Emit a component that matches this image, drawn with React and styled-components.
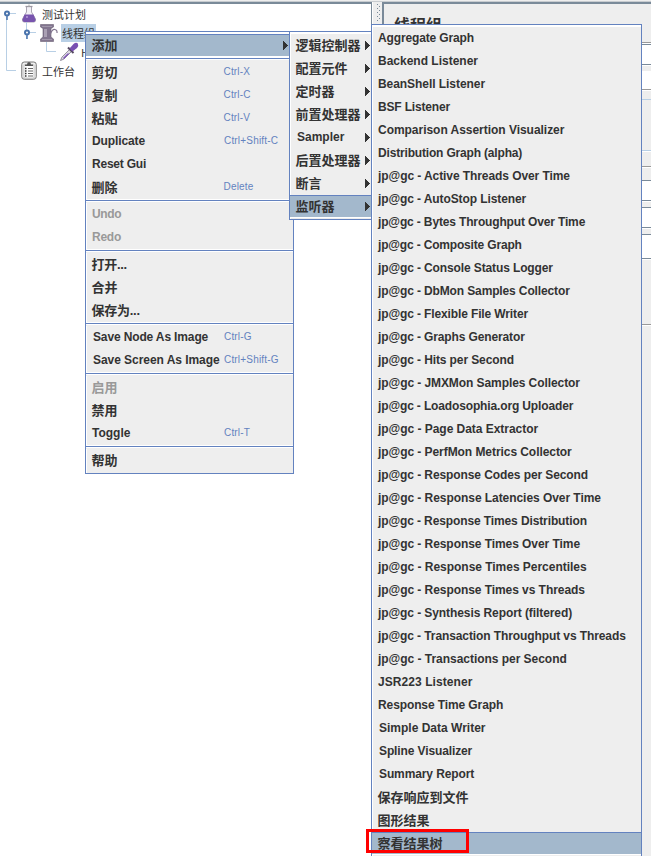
import React from "react";
import styled, { createGlobalStyle } from "styled-components";

const GlobalStyle = createGlobalStyle`
  * { box-sizing: border-box; }
  body { margin: 0; background: #fff; overflow: hidden; }
`;

const line = "#6382bf";
const edge = "#7a8a99";

const Window = styled.main`
  position: relative;
  width: 651px;
  height: 856px;
  display: flex;
  flex-direction: column;
  overflow: hidden;
  background: #eee;
  color: #333;
  font-family: "Liberation Sans", "Noto Sans CJK SC", sans-serif;
  font-size: 12px;
`;
const TopStrip = styled.div`
  height: 2px;
  flex: none;
  background: #eee;
  border-bottom: 1px solid #c8ccd0;
`;
const Split = styled.div`
  flex: 1;
  display: flex;
  min-height: 0;
`;
const TreePane = styled.section`
  width: 372px;
  background: #fff;
  border-top: 2px solid ${edge};
  border-right: 1px solid ${edge};
  padding-left: 2px;
`;
const Divider = styled.div`
  width: 10px;
  border-left: 1px solid #fff;
  background: #eee;
`;
const Grip = styled.svg`
  display: block;
  margin: 2px 0 0 4px;
`;
const DetailPane = styled.section`
  flex: 1;
  border-top: 2px solid ${edge};
  border-left: 2px solid ${edge};
`;
const PaneTitle = styled.h1`
  margin: 0;
  padding: 10px 0 0 10px;
  height: 38px;
  font: bold 16px/20px "Noto Sans CJK SC", sans-serif;
`;
const Band = styled.div`
  height: ${(p) => p.$h}px;
  margin-top: ${(p) => p.$gap || 0}px;
  background: ${(p) => (p.$white ? "#fff" : "#eee")};
  border-top: ${(p) => (p.$top ? `1px solid ${p.$top}` : "0")};
  border-bottom: ${(p) => (p.$bottom ? `1px solid ${p.$bottom}` : "0")};
  box-shadow: 0 1px 0 #fff;
`;

const TreeBody = styled.div`
  display: grid;
  grid-template-rows: 19px 19px 19px 19px;
`;
const TreeRow = styled.div`
  display: flex;
  align-items: center;
  padding-left: ${(p) => p.$indent}px;
  height: 19px;
  gap: ${(p) => p.$gap ?? 4}px;
`;
const TreeLabel = styled.span`
  font: 11px/18px "Noto Sans CJK SC", sans-serif;
  padding: 0 1px;
  white-space: nowrap;
  background: ${(p) => (p.$selected ? "#b8cfe5" : "transparent")};
`;
const TreeLines = styled.svg`
  position: absolute;
  left: 0;
  top: 4px;
`;
const Icon = styled.svg`
  flex: none;
  display: block;
`;

const Popup = styled.div`
  position: absolute;
  left: ${(p) => p.$x}px;
  top: ${(p) => p.$y}px;
  width: ${(p) => p.$w}px;
  background: #eee;
  border: 1px solid ${line};
  box-shadow: inset 1px 1px 0 #fff, inset 0 2px 0 #fff;
  padding: 2px 0 1px;
`;
const Item = styled.div`
  height: 23px;
  display: flex;
  align-items: center;
  padding: 0 5px 0 ${(p) => p.$pad || 6}px;
  font-weight: bold;
  font-size: ${(p) => (p.$cjk ? 13 : 12)}px;
  line-height: 20px;
  white-space: nowrap;
  color: ${(p) => (p.$disabled ? "#999" : "#333")};
  background: ${(p) => (p.$active ? "#a3b8cc" : "transparent")};
  border-top: 1px solid ${(p) => (p.$active ? line : "transparent")};
  border-bottom: 1px solid ${(p) => (p.$active ? "#fff" : "transparent")};
  background-clip: padding-box;
`;
const Label = styled.span`
  flex: ${(p) => (p.$fixed ? "0 0 auto" : "1")};
  width: ${(p) => (p.$fixed ? `${138 - p.$pad}px` : "auto")};
  letter-spacing: ${(p) => p.$ls}px;
  margin: ${(p) => (p.$cjk ? "0 0 0 -0.5px" : "-1px 0 1px")};
`;
const Shortcut = styled.span`
  font-weight: normal;
  font-size: 10px;
  letter-spacing: 0.18px;
  margin-top: -1px;
  color: ${line};
`;
const Separator = styled.div`
  height: 4px;
  border-top: 1px solid #fff;
  background: linear-gradient(${line} 0 1px, #fff 1px 2px, #eee 2px);
`;
const Callout = styled.div`
  position: absolute;
  left: 366px;
  top: 829px;
  width: 103px;
  height: 24px;
  border: 3px solid #f00;
`;

const isCjk = (t) => /[\u4e00-\u9fff]/.test(t);

function Arrow() {
  return (
    <Icon width="5" height="9" viewBox="0 0 5 9" shapeRendering="crispEdges">
      <path d="M0 0H1V1H2V2H3V3H4V4H5V5H4V6H3V7H2V8H1V9H0Z" fill="#333" />
    </Icon>
  );
}

/* `adjust` is the total change in label width, spread over its letters. */
function MenuItem({ text, keys, arrow, active, disabled, pad = 6, adjust = 0 }) {
  const cjk = isCjk(text);
  return (
    <Item $cjk={cjk} $active={active} $disabled={disabled} $pad={pad}>
      <Label $fixed={!!keys} $cjk={cjk} $pad={pad} $ls={adjust / text.length}>{text}</Label>
      {keys && <Shortcut>{keys}</Shortcut>}
      {arrow && <Arrow />}
    </Item>
  );
}

const contextMenu = [
  [{ text: "添加", arrow: true, active: true }],
  [
    { text: "剪切", keys: "Ctrl-X" },
    { text: "复制", keys: "Ctrl-C" },
    { text: "粘贴", keys: "Ctrl-V" },
    { text: "Duplicate", keys: "Ctrl+Shift-C", adjust: -1 },
    { text: "Reset Gui", adjust: -2 },
    { text: "删除", keys: "Delete" },
  ],
  [{ text: "Undo", disabled: true, adjust: -1.5 }, { text: "Redo", disabled: true, adjust: -1 }],
  [{ text: "打开...", adjust: -1.5 }, { text: "合并" }, { text: "保存为...", adjust: -1.5 }],
  [
    { text: "Save Node As Image", keys: "Ctrl-G", pad: 7, adjust: -2.5 },
    { text: "Save Screen As Image", keys: "Ctrl+Shift-G", pad: 7, adjust: -1 },
  ],
  [{ text: "启用", disabled: true }, { text: "禁用" }, { text: "Toggle", keys: "Ctrl-T" }],
  [{ text: "帮助" }],
];

const addMenu = ["逻辑控制器", "配置元件", "定时器", "前置处理器", "Sampler", "后置处理器", "断言", "监听器"];

const listeners = [
  ["Aggregate Graph", -2], ["Backend Listener", 0], ["BeanShell Listener", -1], ["BSF Listener", -2],
  ["Comparison Assertion Visualizer", -1], ["Distribution Graph (alpha)", -4.5],
  ["jp@gc - Active Threads Over Time", -2.5], ["jp@gc - AutoStop Listener", -2.5],
  ["jp@gc - Bytes Throughput Over Time", -5], ["jp@gc - Composite Graph", -4],
  ["jp@gc - Console Status Logger", -3.5], ["jp@gc - DbMon Samples Collector", -4],
  ["jp@gc - Flexible File Writer", -3.5], ["jp@gc - Graphs Generator", -3],
  ["jp@gc - Hits per Second", -2.5], ["jp@gc - JMXMon Samples Collector", -2.5],
  ["jp@gc - Loadosophia.org Uploader", -4.5], ["jp@gc - Page Data Extractor", -1],
  ["jp@gc - PerfMon Metrics Collector", -2], ["jp@gc - Response Codes per Second", -3],
  ["jp@gc - Response Latencies Over Time", -2], ["jp@gc - Response Times Distribution", -4],
  ["jp@gc - Response Times Over Time", -2], ["jp@gc - Response Times Percentiles", -1],
  ["jp@gc - Response Times vs Threads", -2], ["jp@gc - Synthesis Report (filtered)", -3],
  ["jp@gc - Transaction Throughput vs Threads", -4], ["jp@gc - Transactions per Second", -1],
  ["JSR223 Listener", 1], ["Response Time Graph", -2], ["Simple Data Writer", 0],
  ["Spline Visualizer", -2], ["Summary Report", -1.5],
  ["保存响应到文件", 0], ["图形结果", 0], ["察看结果树", 0],
];

function Flask() {
  return (
    <Icon width="16" height="19" viewBox="0 0 16 19">
      <path d="M5.500 3V8L1.500 15Q1 18 3 18H13Q15 18 14.500 15L10.500 8V3" fill="#f2f0f5" stroke="#aaa5b2" />
      <path d="M3.500 10.500H12.500L14.500 15.500Q14.500 18 12.500 18H3.500Q1.500 18 1.500 15.500Z" fill="#7854ae" />
      <path d="M4.500 2.500H11.500" stroke="#9c98a2" strokeWidth="1.3" />
      <path d="M8 0.500V3" stroke="#aaa" />
      <circle cx="6" cy="13" r="1" fill="#b49bd6" />
    </Icon>
  );
}
function Spool() {
  return (
    <Icon width="18" height="18" viewBox="0 0 18 18">
      <path d="M.5 .5H13.500V3L11 4.500V13L13.500 15V17.500H.5V15L3 13V4.500L.5 3Z" fill="#82758f" stroke="#6a6074" strokeWidth=".6" />
      <path d="M4 5H7V13H4Z" fill="#aaa0b4" />
      <path d="M2 2.500H12M2 15.500H12" stroke="#a197aa" />
      <path d="M10 11Q12 5 15 5.500Q17.500 6 17 9" fill="none" stroke="#82758f" strokeWidth="1.2" />
    </Icon>
  );
}
function Pipette() {
  return (
    <Icon width="20" height="20" viewBox="0 0 20 20">
      <path d="M1.500 18.500L3 15L10.500 7.500L12.500 9.500L5 17Z" fill="#dcd9e2" stroke="#8d8797" strokeWidth=".9" />
      <path d="M4 16L8.500 11.500H10.500L5 17Z" fill="#8056b8" />
      <path d="M9 5.500L14.500 11" stroke="#53475f" strokeWidth="2" />
      <path d="M10.500 6.500L14.500 2Q17 0 18.800 1.500Q20 3.500 18 6L13.500 9.500Z" fill="#7950b2" />
    </Icon>
  );
}
function Clipboard() {
  return (
    <Icon width="16" height="19" viewBox="0 0 16 19">
      <rect x=".75" y="1" width="14.500" height="17.250" rx="2.500" fill="#eee" stroke="#777" />
      <rect x="3" y="4" width="10" height="13" fill="#fff" stroke="#aaa" strokeWidth=".6" />
      <path d="M4 3.500H6Q6 1 8 1Q10 1 10 3.500H12V5H4Z" fill="#555" />
      <path d="M7 7.500H12M7 10H12M7 12.500H12M7 15H12" stroke="#666" />
      <path d="M4 7.500H5.500M4 10H5.500M4 12.500H5.500M4 15H5.500" stroke="#333" strokeWidth="1.5" />
    </Icon>
  );
}

export default function App() {
  return (
    <Window>
      <GlobalStyle />
      <TopStrip />
      <Split>
        <TreePane>
          <TreeLines width="60" height="80" viewBox="0 4 60 80">
            <path d="M6.500 17V70.500H16M9 13.500H16M26.500 22V30M26.500 36V39M29 32.500H36M46.500 42V51.500H56" fill="none" stroke="#b8cfe5" />
            <circle cx="7" cy="13.500" r="2" fill="#fff" stroke="#4a74ad" strokeWidth="2" />
            <path d="M7 16V20M27 35V39" stroke="#4a74ad" strokeWidth="1.5" />
            <circle cx="27" cy="32.500" r="2" fill="#fff" stroke="#4a74ad" strokeWidth="2" />
          </TreeLines>
          <TreeBody>
            <TreeRow $indent={19}><Flask /><TreeLabel>测试计划</TreeLabel></TreeRow>
            <TreeRow $indent={38} $gap={3}><Spool /><TreeLabel $selected>线程组</TreeLabel></TreeRow>
            <TreeRow $indent={57} $gap={1}><Pipette /><TreeLabel>H</TreeLabel></TreeRow>
            <TreeRow $indent={19}><Clipboard /><TreeLabel>工作台</TreeLabel></TreeRow>
          </TreeBody>
        </TreePane>
        <Divider>
          <Grip width="4" height="18" viewBox="0 0 4 18" shapeRendering="crispEdges">
            {[0, 4, 8, 12, 16].map((y) => (
              <path key={y} d={`M0 ${y}h1v1h-1zM2 ${y + 2}h1v1h-1z`} fill={edge} />
            ))}
          </Grip>
        </Divider>
        <DetailPane>
          <PaneTitle>线程组</PaneTitle>
          <Band $h={1} $top="#999" />
          <Band $h={21} $gap={1} $white $top={edge} $bottom={edge} />
          <Band $h={19} $gap={6} $white $bottom="#999" />
          <Band $h={52} $gap={9} $top="#b8cfe5" $bottom="#b8cfe5" />
          <Band $h={1} $gap={15} $top="#999" />
          <Band $h={21} $gap={13} $white $top={edge} $bottom={edge} />
          <Band $h={21} $gap={6} $white $top={edge} $bottom={edge} />
          <Band $h={25} $gap={6} $white $top={edge} $bottom={edge} />
          <Band $h={1} $gap={65} $top="#999" />
        </DetailPane>
      </Split>

      <Popup $x={85} $y={31} $w={209}>
        {contextMenu.map((group, i) => (
          <React.Fragment key={i}>
            {i > 0 && <Separator />}
            {group.map((item) => <MenuItem key={item.text} {...item} />)}
          </React.Fragment>
        ))}
      </Popup>
      <Popup $x={289} $y={31} $w={87}>
        {addMenu.map((text) => (
          <MenuItem key={text} text={text} arrow active={text === "监听器"} pad={isCjk(text) ? 6 : 7} />
        ))}
      </Popup>
      <Popup $x={371} $y={24} $w={271}>
        {listeners.map(([text, adjust]) => (
          <MenuItem
            key={text}
            text={text}
            adjust={adjust}
            pad={text.startsWith("S") ? 7 : 6}
            active={text === "察看结果树"}
          />
        ))}
      </Popup>
      <Callout />
    </Window>
  );
}
